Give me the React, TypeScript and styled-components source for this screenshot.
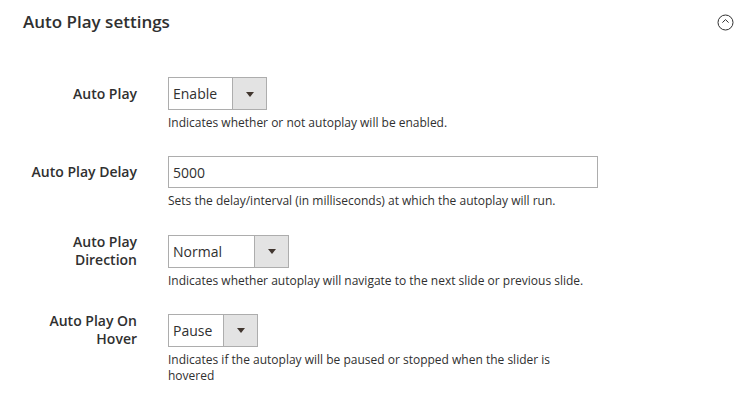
import styled, { createGlobalStyle } from "styled-components";

const GlobalStyle = createGlobalStyle`
  html, body {
    margin: 0;
    padding: 0;
    background: #ffffff;
  }
  body {
    font-family: "Open Sans", "Liberation Sans", Arial, sans-serif;
    color: #303030;
  }
`;

type Field = {
  label: string;
  kind: "select" | "input";
  value: string;
  width: number;
  note: string;
};

const fields: Field[] = [
  {
    label: "Auto Play",
    kind: "select",
    value: "Enable",
    width: 99,
    note: "Indicates whether or not autoplay will be enabled.",
  },
  {
    label: "Auto Play Delay",
    kind: "input",
    value: "5000",
    width: 430,
    note: "Sets the delay/interval (in milliseconds) at which the autoplay will run.",
  },
  {
    label: "Auto Play Direction",
    kind: "select",
    value: "Normal",
    width: 121,
    note: "Indicates whether autoplay will navigate to the next slide or previous slide.",
  },
  {
    label: "Auto Play On Hover",
    kind: "select",
    value: "Pause",
    width: 90,
    note: "Indicates if the autoplay will be paused or stopped when the slider is hovered",
  },
];

export default function App() {
  return (
    <>
      <GlobalStyle />
      <Section>
        <Header>
          <h3>Auto Play settings</h3>
          <CollapseIcon viewBox="0 0 17 17" aria-label="collapse">
            <circle cx="8.5" cy="8.5" r="7.5" />
            <path d="M5.4 8.6 L8.5 5.6 L11.6 8.6" />
          </CollapseIcon>
        </Header>

        <Fieldset>
          {fields.map((f, idx) => {
            return (
              <Row key={idx}>
                <Label $height={f.kind === "input" ? 32 : 33}>
                  <span>{f.label}</span>
                </Label>
                <Control>
                  {f.kind === "select" ? (
                    <Select $width={f.width}>
                      <span>{f.value}</span>
                      <Arrow />
                    </Select>
                  ) : (
                    <Input $width={f.width} defaultValue={f.value} />
                  )}
                  <Note>{f.note}</Note>
                </Control>
              </Row>
            );
          })}
        </Fieldset>
      </Section>
    </>
  );
}

//Styled Components
const Section = styled.section`
  width: 745px;
  height: 400px;
  overflow: hidden;
  box-sizing: border-box;
`;

const Header = styled.header`
  display: flex;
  justify-content: space-between;
  align-items: flex-start;
  padding: 10px 11px 0 23px;

  h3 {
    margin: 0;
    font-size: 17px;
    font-weight: 600;
    line-height: 24px;
    color: #303030;
  }
`;

const CollapseIcon = styled.svg`
  width: 17px;
  height: 17px;
  margin-top: 4px;
  fill: none;
  stroke: #303030;
  stroke-width: 1;
`;

const Fieldset = styled.div`
  display: flex;
  flex-direction: column;
  gap: 25.3px;
  padding-top: 43px;
`;

const Row = styled.div`
  display: flex;
  align-items: flex-start;
  gap: 31px;
`;

const Label = styled.label<{ $height: number }>`
  width: 115px;
  margin-left: 22px;
  height: ${(p) => p.$height}px;
  display: flex;
  align-items: center;
  justify-content: flex-end;
  text-align: right;
  font-size: 14px;
  font-weight: 600;
  line-height: 18px;
  color: #303030;
`;

const Control = styled.div`
  width: 430px;
  display: flex;
  flex-direction: column;
  align-items: flex-start;
`;

const Select = styled.div<{ $width: number }>`
  width: ${(p) => p.$width}px;
  height: 33px;
  box-sizing: border-box;
  border: 1px solid #adadad;
  background: #ffffff;
  display: flex;
  align-items: stretch;

  span {
    flex: 1;
    display: flex;
    align-items: center;
    padding-left: 4px;
    font-size: 14px;
    color: #303030;
  }
`;

const Arrow = styled.div`
  width: 33px;
  border-left: 1px solid #adadad;
  background: #e3e3e3;
  position: relative;

  &::after {
    content: "";
    position: absolute;
    left: 50%;
    top: 50%;
    margin-left: -4px;
    margin-top: -2px;
    border-left: 4px solid transparent;
    border-right: 4px solid transparent;
    border-top: 5px solid #41362f;
  }
`;

const Input = styled.input<{ $width: number }>`
  width: ${(p) => p.$width}px;
  height: 32px;
  box-sizing: border-box;
  border: 1px solid #adadad;
  border-radius: 0;
  padding: 0 4px;
  font-family: "Open Sans", "Liberation Sans", Arial, sans-serif;
  font-size: 14px;
  color: #303030;
  outline: none;
`;

const Note = styled.div`
  margin-top: 5px;
  font-size: 12px;
  line-height: 16px;
  color: #303030;
`;
